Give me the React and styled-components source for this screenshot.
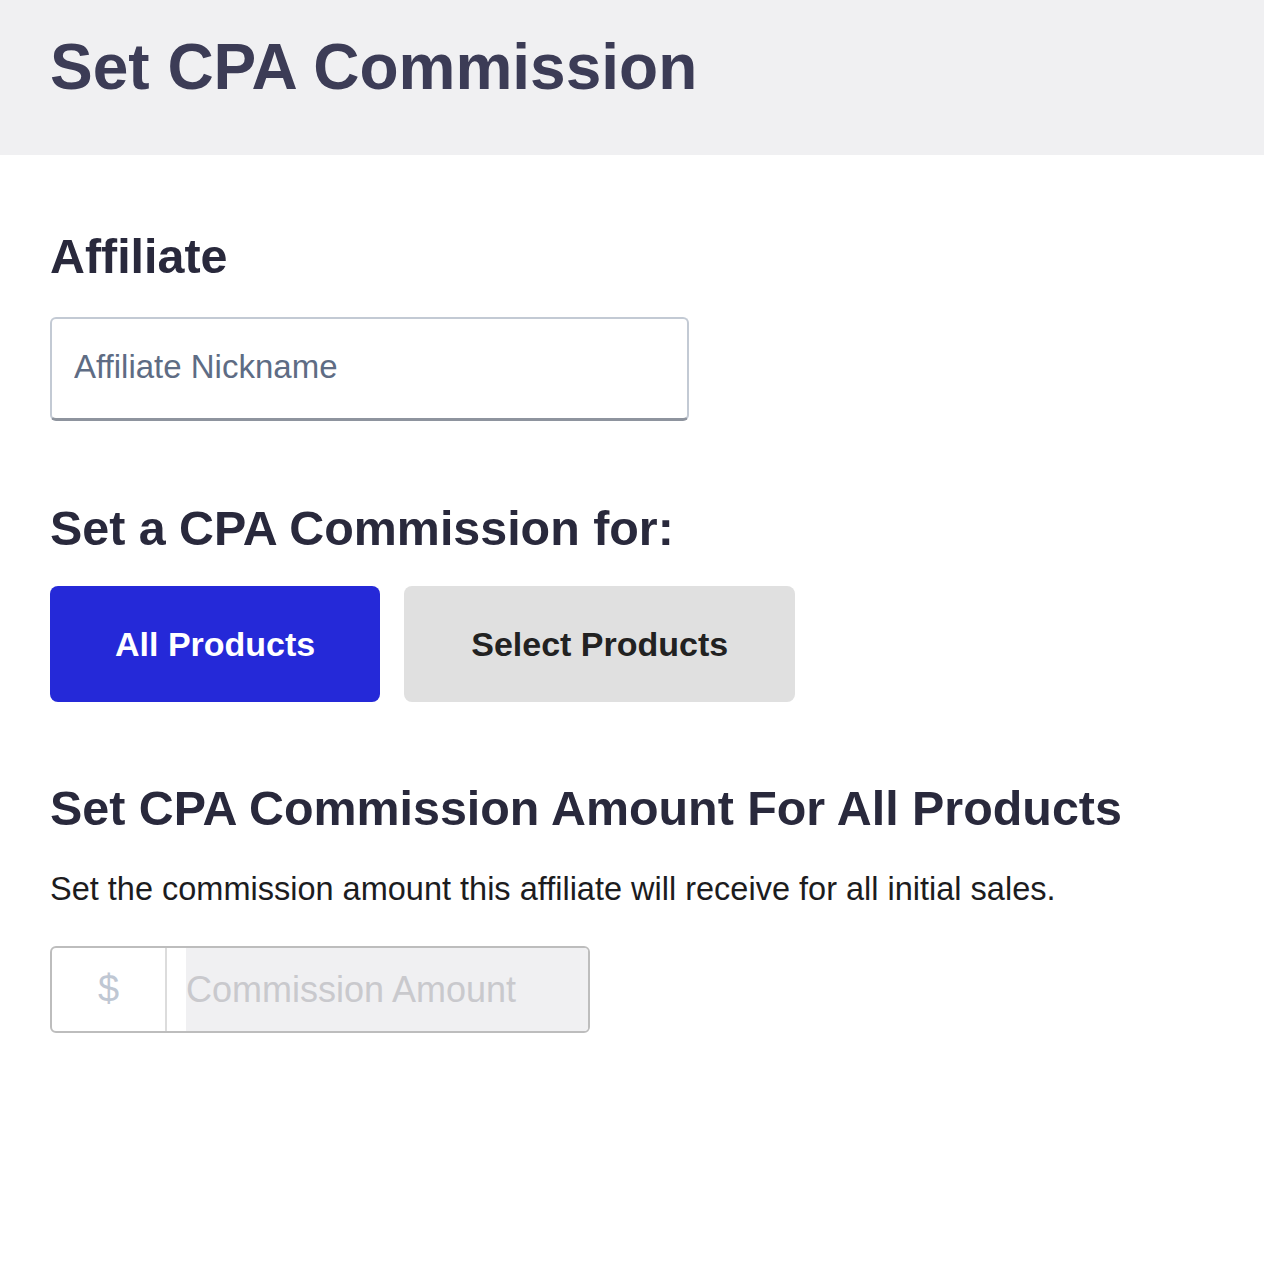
import React, { useState } from "react";
import styled, { createGlobalStyle } from "styled-components";

const GlobalStyle = createGlobalStyle`
  body {
    margin: 0;
    background: #ffffff;
    font-family: "Liberation Sans", Arial, Helvetica, sans-serif;
  }
`;

function App() {
  const [scope, setScope] = useState("all");

  return (
    <Page>
      <GlobalStyle />
      <Header>
        <Title>Set CPA Commission</Title>
      </Header>

      <Content>
        <Heading $top={0}>Affiliate</Heading>
        <TextInput placeholder="Affiliate Nickname" />

        <Heading $top={83}>Set a CPA Commission for:</Heading>
        <ButtonRow>
          <Toggle $active={scope === "all"} onClick={() => setScope("all")}>
            All Products
          </Toggle>
          <Toggle
            $active={scope === "select"}
            onClick={() => setScope("select")}
          >
            Select Products
          </Toggle>
        </ButtonRow>

        <Heading $top={82}>Set CPA Commission Amount For All Products</Heading>
        <Description>
          Set the commission amount this affiliate will receive for all initial
          sales.
        </Description>

        <AmountField>
          <Prefix>$</Prefix>
          <AmountInput placeholder="Commission Amount" disabled />
        </AmountField>
      </Content>
    </Page>
  );
}

const Page = styled.div`
  min-height: 1270px;
`;

const Header = styled.header`
  background-color: #f0f0f2;
  height: 155px;
  box-sizing: border-box;
  padding: 35px 50px 0;
`;

const Title = styled.h1`
  margin: 0;
  font-size: 64px;
  line-height: 64px;
  font-weight: 700;
  color: #3c3c56;
`;

const Content = styled.main`
  padding: 77px 50px 0;
`;

const Heading = styled.h2`
  margin: ${(p) => p.$top}px 0 0;
  font-size: 48.4px;
  line-height: 48px;
  font-weight: 700;
  color: #29293c;
`;

const TextInput = styled.input`
  display: block;
  margin-top: 37px;
  width: 639px;
  height: 104px;
  box-sizing: border-box;
  padding: 0 22px 4px;
  border: 2px solid #c3cad4;
  border-bottom: 3px solid #8e949e;
  border-radius: 6px;
  font-family: inherit;
  font-size: 33px;
  color: #333;
  outline: none;

  &::placeholder {
    color: #5e6c84;
  }
`;

const ButtonRow = styled.div`
  display: flex;
  gap: 24px;
  margin-top: 34px;
`;

const Toggle = styled.button`
  height: 116px;
  padding: 0 ${(p) => (p.$active ? 65 : 67)}px;
  border: none;
  border-radius: 8px;
  font-family: inherit;
  font-size: 34px;
  font-weight: 700;
  cursor: pointer;
  background-color: ${(p) => (p.$active ? "#2529d8" : "#e0e0e0")};
  color: ${(p) => (p.$active ? "#ffffff" : "#222222")};
`;

const Description = styled.p`
  margin: 38px 0 0;
  font-size: 32.5px;
  line-height: 38px;
  color: #1c1c1e;
`;

const AmountField = styled.div`
  display: flex;
  margin-top: 38px;
  width: 540px;
  height: 87px;
  box-sizing: border-box;
  border: 2px solid #bdbdbd;
  border-radius: 6px;
  overflow: hidden;
`;

const Prefix = styled.span`
  flex: 0 0 113px;
  display: flex;
  align-items: center;
  justify-content: center;
  border-right: 2px solid #dcdcdc;
  font-size: 38px;
  color: #bfc7d3;
`;

const AmountInput = styled.input`
  flex: 1;
  min-width: 0;
  margin-left: 19px;
  padding: 0;
  border: none;
  background-color: #f0f0f2;
  font-family: inherit;
  font-size: 36px;
  outline: none;

  &::placeholder {
    color: #c9c9cd;
  }
`;

export default App;
